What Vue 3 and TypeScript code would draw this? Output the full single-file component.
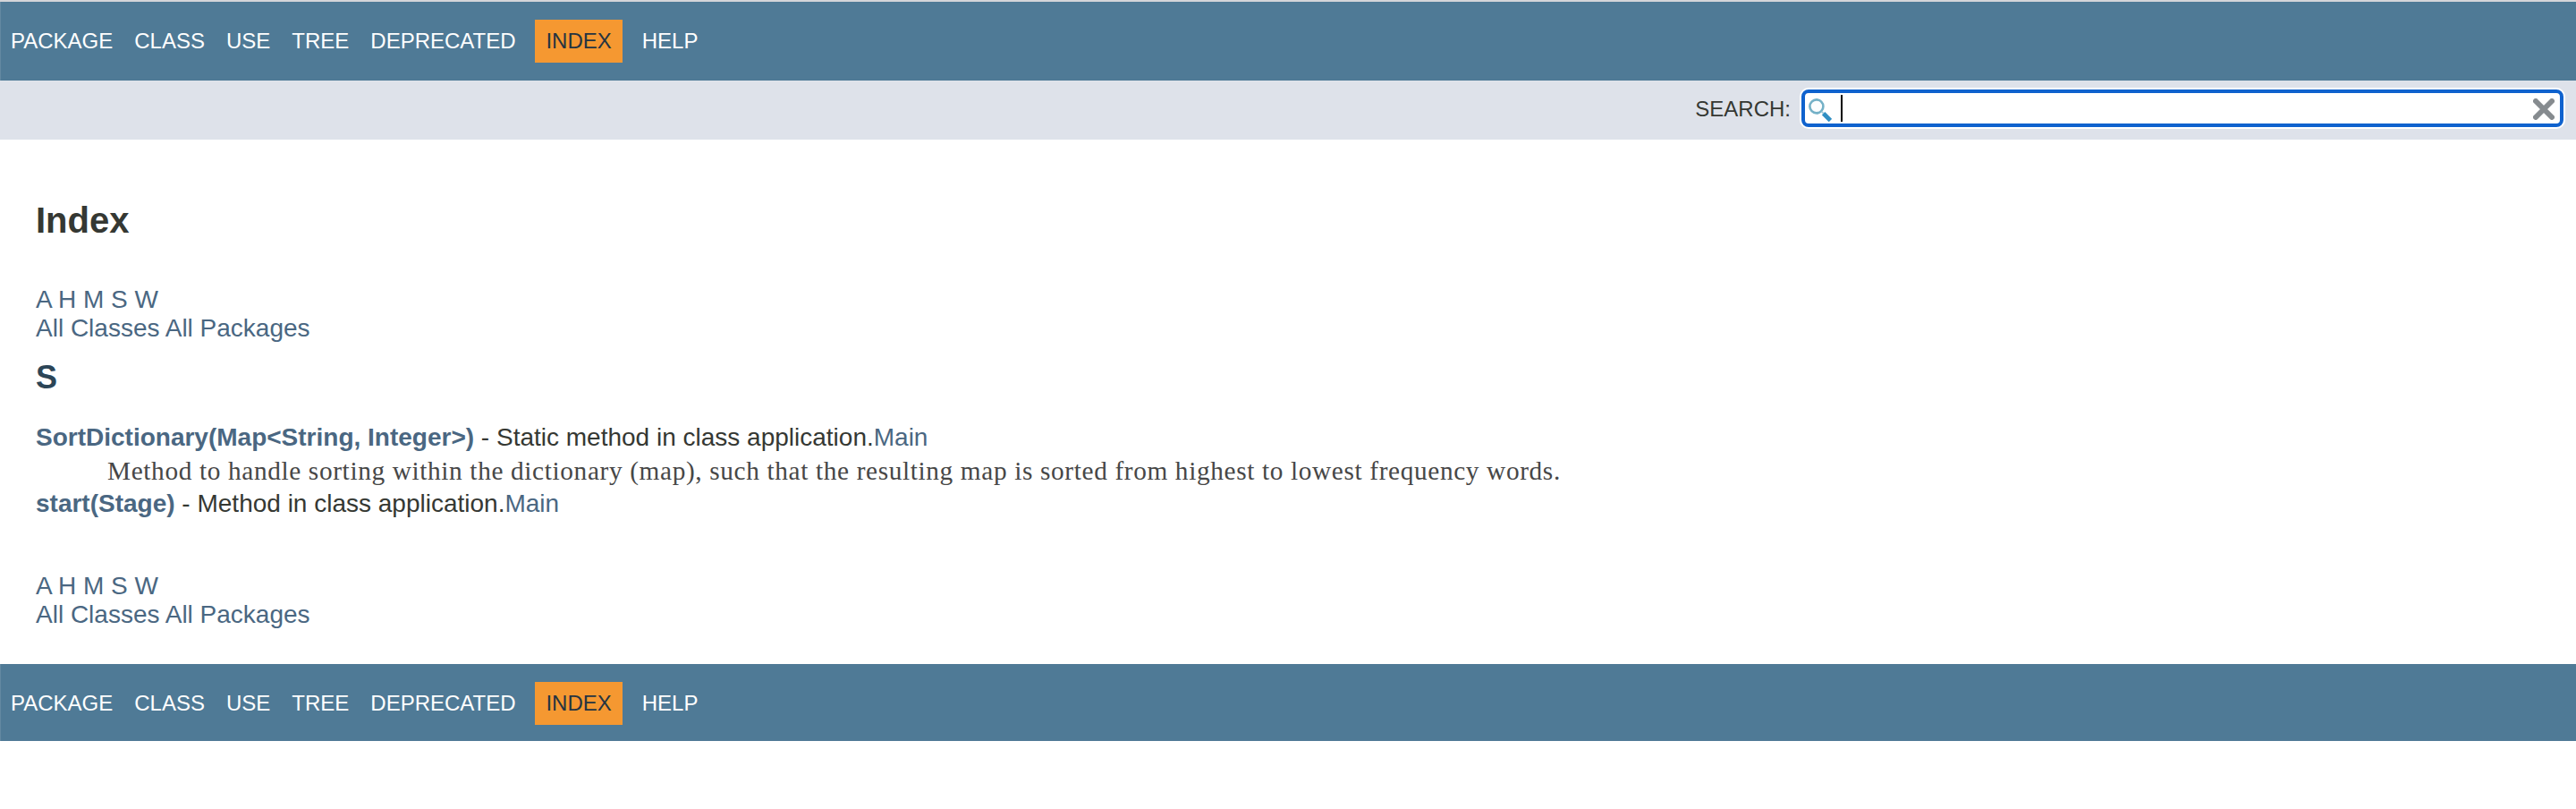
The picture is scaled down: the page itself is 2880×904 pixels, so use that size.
<script setup lang="ts">
interface NavItem {
  label: string
  active?: boolean
}
interface Entry {
  signature: string
  kind: string
  owner: string
  description?: string
}

const navItems: NavItem[] = [
  { label: 'Package' },
  { label: 'Class' },
  { label: 'Use' },
  { label: 'Tree' },
  { label: 'Deprecated' },
  { label: 'Index', active: true },
  { label: 'Help' },
]
const letters: string[] = ['A', 'H', 'M', 'S', 'W']
const overview: string[] = ['All Classes', 'All Packages']
const entries: Entry[] = [
  {
    signature: 'SortDictionary(Map<String, Integer>)',
    kind: 'Static method in class application.',
    owner: 'Main',
    description:
      'Method to handle sorting within the dictionary (map), such that the resulting map is sorted from highest to lowest frequency words.',
  },
  { signature: 'start(Stage)', kind: 'Method in class application.', owner: 'Main' },
]
</script>

<template>
  <div class="page">
    <header>
      <nav class="top-nav">
        <ul>
          <li v-for="item in navItems" :key="item.label" :class="{ active: item.active }">{{ item.label }}</li>
        </ul>
      </nav>
      <div class="sub-nav">
        <label for="search">SEARCH:</label>
        <div id="search" class="search-box">
          <svg class="glass" viewBox="0 0 26 26" width="26" height="26">
            <circle cx="8.9" cy="8.9" r="7.5" fill="#fbfdfe" stroke="#74b1c7" stroke-width="2.6" />
            <path d="M14.6 14.6l2 2" stroke="#a5cbd9" stroke-width="2" />
            <path d="M16.6 16.8l7.8 7.8" stroke="#308fc3" stroke-width="4.8" />
          </svg>
          <span class="caret"></span>
          <svg class="clear" viewBox="0 0 24 24" width="24" height="24">
            <path d="M3 3l18 18M21 3L3 21" stroke="#868b8f" stroke-width="6" stroke-linecap="round" />
          </svg>
        </div>
      </div>
    </header>

    <main>
      <h1>Index</h1>
      <div class="links">
        <div><template v-for="l in letters" :key="l"><a>{{ l }}</a>{{ ' ' }}</template></div>
        <div><template v-for="o in overview" :key="o"><a>{{ o }}</a>{{ ' ' }}</template></div>
      </div>
      <h2>S</h2>
      <dl>
        <template v-for="e in entries" :key="e.signature">
          <dt><a class="signature">{{ e.signature }}</a> - {{ e.kind }}<a>{{ e.owner }}</a></dt>
          <dd v-if="e.description">{{ e.description }}</dd>
        </template>
      </dl>
      <div class="links">
        <div><template v-for="l in letters" :key="l"><a>{{ l }}</a>{{ ' ' }}</template></div>
        <div><template v-for="o in overview" :key="o"><a>{{ o }}</a>{{ ' ' }}</template></div>
      </div>
    </main>

    <footer>
      <nav class="bottom-nav">
        <ul>
          <li v-for="item in navItems" :key="item.label" :class="{ active: item.active }">{{ item.label }}</li>
        </ul>
      </nav>
    </footer>
  </div>
</template>

<style>
body {
  margin: 0;
  background: #fff;
}
</style>

<style scoped>
.page {
  box-sizing: border-box;
  height: 904px;
  overflow: hidden;
  border-top: 2px solid #d4d5d9;
  font-family: 'Liberation Sans', Arial, sans-serif;
  font-size: 28px;
  line-height: 32px;
  color: #353833;
  background: #fff;
  text-rendering: optimizeLegibility;
}
.top-nav,
.bottom-nav {
  box-sizing: border-box;
  height: 88px;
  padding-top: 20px;
  background: #4f7a96;
  border-left: 1px solid #6388a1;
  color: #fff;
  font-size: 24px;
}
.bottom-nav {
  height: 86px;
}
ul {
  display: flex;
  margin: 0 0 0 -1px;
  padding: 0;
  list-style: none;
}
li {
  padding: 10px 12px;
  line-height: 28px;
  text-transform: uppercase;
}
li.active {
  margin: 0 10px 0 9.8px;
  background: #f59831;
  color: #253441;
}
.sub-nav {
  box-sizing: border-box;
  height: 66px;
  padding: 10px 14px 0 0;
  display: flex;
  justify-content: flex-end;
  background: #dee2ea;
  font-size: 24px;
}
.sub-nav label {
  margin-right: 12px;
  line-height: 43px;
}
.search-box {
  box-sizing: border-box;
  width: 852px;
  height: 42px;
  padding: 2px 6px 0 4px;
  display: flex;
  border: 4px solid #0f62ce;
  border-radius: 8px;
  background: #fff;
  box-shadow: 0 0 0 2px #fff;
}
.glass,
.clear {
  margin-top: 4px;
}
.caret {
  width: 2px;
  height: 30px;
  margin-left: 10px;
  background: #000;
}
.clear {
  margin-left: auto;
}
main {
  height: 586px;
  box-sizing: border-box;
  padding: 67px 40px 0;
}
h1 {
  margin: 0 0 50px;
  font-size: 40px;
  line-height: 46px;
}
h2 {
  margin: 18px 0 30px;
  font-size: 36px;
  line-height: 42px;
  color: #2c4557;
}
a {
  color: #4a6782;
}
.signature {
  font-weight: bold;
}
dl {
  margin: 0 0 60px;
}
dd {
  margin: 0 0 0 80px;
  height: 42px;
  line-height: 42px;
  font-family: 'Liberation Serif', serif;
  font-size: 29.3px;
  letter-spacing: 0.64px;
  color: #474747;
  white-space: nowrap;
}
</style>
